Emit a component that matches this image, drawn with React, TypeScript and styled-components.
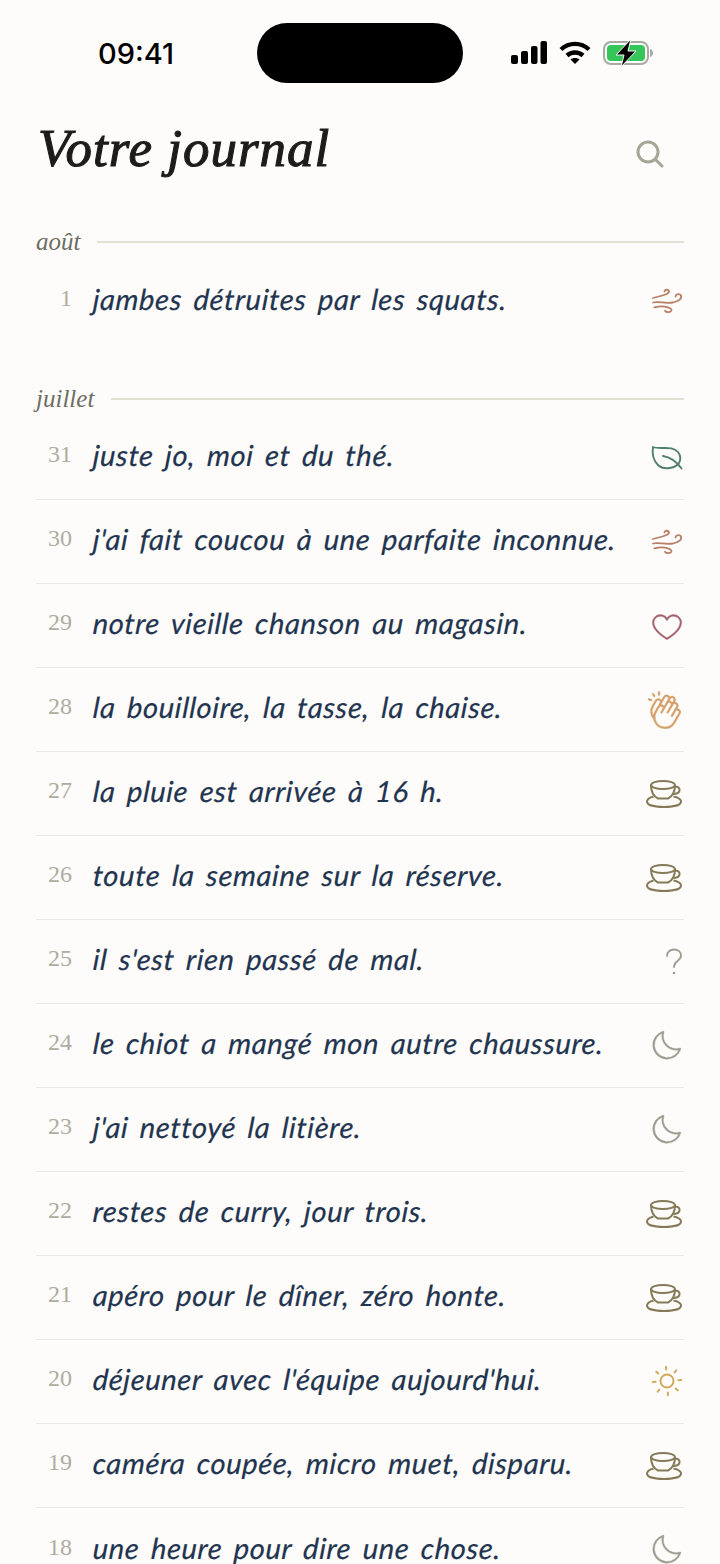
import React from 'react';
import styled, { createGlobalStyle } from 'styled-components';
import {
  PiHandsClappingLight,
  PiHeartLight,
  PiMagnifyingGlassBold,
  PiMoonLight,
} from 'react-icons/pi';

const GlobalStyle = createGlobalStyle`
  html, body {
    margin: 0;
    padding: 0;
    background: #fdfcfa;
  }
`;

const Screen = styled.div`
  width: 720px;
  height: 1564px;
  overflow: hidden;
  background: #fdfcfa;
`;

const StatusBar = styled.div`
  height: 106px;
  padding: 23px 66px 0 98px;
  box-sizing: border-box;
  display: flex;
  align-items: flex-start;
`;

const Time = styled.div`
  width: 159px;
  height: 60px;
  line-height: 61px;
  font-family: Inter, "Liberation Sans", sans-serif;
  font-size: 29px;
  font-weight: 500;
  color: #000;
`;

const Island = styled.div`
  width: 206px;
  height: 60px;
  border-radius: 30px;
  background: #000;
`;

const StatusIcons = styled.div`
  height: 60px;
  margin-left: 48px;
  display: flex;
  align-items: center;
  gap: 12px;
`;

const Header = styled.header`
  height: 119px;
  box-sizing: border-box;
  padding: 0 54px 35px 38px;
  display: flex;
  align-items: center;
  justify-content: space-between;
`;

const Title = styled.h1`
  margin: 0;
  font-family: "Liberation Serif", serif;
  font-style: italic;
  font-weight: 400;
  font-size: 53px;
  letter-spacing: 1px;
  color: #1d1c19;
  -webkit-text-stroke: 1.1px #1d1c19;
`;

const SearchButton = styled.div`
  display: flex;
  margin-top: 12px;
  color: #a5a697;
`;

const Section = styled.section`
  padding: 0 36px;
  margin-bottom: 39px;
`;

const MonthHeader = styled.div`
  height: 34px;
  display: flex;
  align-items: center;
  gap: 17px;
`;

const MonthName = styled.span`
  font-family: "Liberation Serif", serif;
  font-style: italic;
  font-size: 25px;
  color: #6e6c63;
`;

const MonthLine = styled.div`
  flex: 1;
  height: 2px;
  background: #e2e0d3;
`;

const Row = styled.div`
  height: 84px;
  box-sizing: border-box;
  padding-bottom: 6px;
  display: flex;
  align-items: center;
  border-bottom: 1px solid #ebe9e4;

  &:last-child {
    border-bottom: none;
  }
`;

const DayNumber = styled.span`
  width: 36px;
  flex: none;
  text-align: right;
  font-family: "Liberation Serif", serif;
  font-size: 24px;
  color: #aeada0;
`;

const EntryText = styled.span`
  flex: 1;
  margin-left: 21px;
  white-space: nowrap;
  font-family: Lato, "Noto Sans", sans-serif;
  font-style: italic;
  font-size: 29px;
  letter-spacing: 0.7px;
  word-spacing: 4px;
  color: #22344f;
  -webkit-text-stroke: 0.2px #22344f;
  transform: skewX(-4deg);
  transform-origin: left center;
`;

const MoodSlot = styled.div<{ $color: string }>`
  width: 42px;
  flex: none;
  margin-top: 6px;
  display: flex;
  justify-content: flex-end;
  color: ${(p) => p.$color};
`;

const ThickIcon = styled.span<{ $flip?: boolean }>`
  display: flex;
  transform: ${(p) => (p.$flip ? 'scaleX(-1)' : 'none')};

  svg {
    stroke: currentColor;
    stroke-width: 3;
  }
`;

const SignalIcon = () => (
  <svg width="36" height="24" viewBox="0 0 36 24">
    <rect x="0" y="14" width="7" height="9" rx="2" fill="#000" />
    <rect x="10" y="10" width="7" height="13" rx="2" fill="#000" />
    <rect x="20" y="5" width="6.500" height="18" rx="2" fill="#000" />
    <rect x="29.500" y="0" width="6.500" height="23" rx="2" fill="#000" />
  </svg>
);

const WifiIcon = () => (
  <svg width="32" height="24" viewBox="0 0 32 24" fill="none" stroke="#000" strokeWidth="4.4">
    <path d="M2 8.500C10 1 22 1 30 8.500" />
    <path d="M8 14.500C12.500 10.500 19.500 10.500 24 14.500" />
    <path d="M16 23l-4.500-4.500c2.500-2 6.500-2 9 0z" fill="#000" stroke="none" />
  </svg>
);

const BatteryIcon = () => (
  <svg width="50" height="26" viewBox="0 0 50 26">
    <rect x="1" y="2" width="44" height="22" rx="7" fill="none" stroke="#a8aaa4" strokeWidth="2" />
    <rect x="4" y="5" width="38" height="16" rx="4" fill="#35c659" />
    <path d="M47 9c2 .5 3 2 3 4s-1 3.500-3 4z" fill="#a8aaa4" />
    <path d="M28 -1L13 15h8l-3 12 15-16h-8z" fill="#000" stroke="#fdfcfa" strokeWidth="1" />
  </svg>
);

const WindIcon = () => (
  <svg width="33" height="26" viewBox="0 0 33 26" fill="none" stroke="currentColor" strokeWidth="1.8" strokeLinecap="round">
    <path d="M2 10C6 9 10 8 13 7C17 6 19 4 17.500 2.500C16 1 13.500 2 13.500 3.500" />
    <path d="M2 14.500C8 13 14 16 22 14.500C28 13 31 10.500 30 7.500C29 5.500 25 5.500 24.500 8.500" />
    <path d="M3.300 19.300C7 18.500 11 18 14 18.700C18 19.500 21 21 20.500 22.500C19.500 25 15 24.500 14 22.700" />
  </svg>
);

const LeafIcon = () => (
  <svg width="34" height="26" viewBox="0 0 34 26" fill="none" stroke="currentColor" strokeWidth="1.9" strokeLinecap="round" strokeLinejoin="round">
    <path d="M3 2C10 5 22 0 28 7C31 11 31 15 28.500 19C23 24 13 25 8 20C3 15 2 8 3 2Z" />
    <path d="M13 11C20 12 26 16 31.500 23.500" />
  </svg>
);

const TeaCupIcon = () => (
  <svg width="38" height="30" viewBox="0 0 38 30" fill="none" stroke="currentColor" strokeWidth="2">
    <ellipse cx="17" cy="6" rx="12" ry="4" />
    <path d="M5 6C5 13 7 17 12 19.500H22C27 17 29 13 29 6" />
    <path d="M29 8C32 7 34 9 33.500 11.500C33 14 30 15 27 15" />
    <path d="M7.500 17.500C4 18.500 1 20 1 22.500C1 26 8 28 18 28S35 26 35 22.500C35 20.500 32 18.500 27.500 17.500" />
  </svg>
);

const QuestionIcon = () => (
  <svg width="19" height="28" viewBox="0 0 19 28" fill="none" stroke="currentColor" strokeWidth="1.8" strokeLinecap="round">
    <path d="M2 8C2 4 5 1.500 9 1.500C13 1.500 16 4 16 7.500C16 10.500 14 12 12 13.500C10 15 9 16 9 19" />
    <circle cx="9" cy="25" r="1.300" fill="currentColor" stroke="none" />
  </svg>
);

const sunRays = [-4, 41, 86, 131, 176, 221, 266, 311];

const SunIcon = () => (
  <svg width="32" height="32" viewBox="0 0 32 32" fill="none" stroke="currentColor" strokeWidth="2" strokeLinecap="round">
    <circle cx="15" cy="15" r="6.500" />
    {sunRays.map((angle) => (
      <line key={angle} x1="15" y1="3.500" x2="15" y2="0.800" transform={`rotate(${angle} 15 15)`} />
    ))}
  </svg>
);

type Mood = 'wind' | 'leaf' | 'heart' | 'clap' | 'cup' | 'unknown' | 'moon' | 'sun';

const moodColors: Record<Mood, string> = {
  wind: '#b67f66',
  leaf: '#4f806c',
  heart: '#a3616b',
  clap: '#d49f68',
  cup: '#857a58',
  unknown: '#9c9d90',
  moon: '#9c9d90',
  sun: '#d2a95c',
};

const MoodIcon: React.FC<{ mood: Mood }> = ({ mood }) => {
  switch (mood) {
    case 'wind':
      return <WindIcon />;
    case 'leaf':
      return <LeafIcon />;
    case 'heart':
      return (
        <ThickIcon>
          <PiHeartLight size={34} />
        </ThickIcon>
      );
    case 'clap':
      return (
        <ThickIcon $flip>
          <PiHandsClappingLight size={38} />
        </ThickIcon>
      );
    case 'cup':
      return <TeaCupIcon />;
    case 'unknown':
      return <QuestionIcon />;
    case 'moon':
      return (
        <ThickIcon>
          <PiMoonLight size={36} />
        </ThickIcon>
      );
    default:
      return <SunIcon />;
  }
};

type Entry = { day: number; text: string; mood: Mood };

const august: Entry[] = [{ day: 1, text: 'jambes détruites par les squats.', mood: 'wind' }];

const july: Entry[] = [
  { day: 31, text: 'juste jo, moi et du thé.', mood: 'leaf' },
  { day: 30, text: "j'ai fait coucou à une parfaite inconnue.", mood: 'wind' },
  { day: 29, text: 'notre vieille chanson au magasin.', mood: 'heart' },
  { day: 28, text: 'la bouilloire, la tasse, la chaise.', mood: 'clap' },
  { day: 27, text: 'la pluie est arrivée à 16 h.', mood: 'cup' },
  { day: 26, text: 'toute la semaine sur la réserve.', mood: 'cup' },
  { day: 25, text: "il s'est rien passé de mal.", mood: 'unknown' },
  { day: 24, text: 'le chiot a mangé mon autre chaussure.', mood: 'moon' },
  { day: 23, text: "j'ai nettoyé la litière.", mood: 'moon' },
  { day: 22, text: 'restes de curry, jour trois.', mood: 'cup' },
  { day: 21, text: 'apéro pour le dîner, zéro honte.', mood: 'cup' },
  { day: 20, text: "déjeuner avec l'équipe aujourd'hui.", mood: 'sun' },
  { day: 19, text: 'caméra coupée, micro muet, disparu.', mood: 'cup' },
  { day: 18, text: 'une heure pour dire une chose.', mood: 'moon' },
];

const MonthSection: React.FC<{ name: string; entries: Entry[] }> = ({ name, entries }) => (
  <Section>
    <MonthHeader>
      <MonthName>{name}</MonthName>
      <MonthLine />
    </MonthHeader>
    {entries.map((entry) => (
      <Row key={entry.day}>
        <DayNumber>{entry.day}</DayNumber>
        <EntryText>{entry.text}</EntryText>
        <MoodSlot $color={moodColors[entry.mood]}>
          <MoodIcon mood={entry.mood} />
        </MoodSlot>
      </Row>
    ))}
  </Section>
);

const App: React.FC = () => {
  return (
    <Screen>
      <GlobalStyle />
      <StatusBar>
        <Time>09:41</Time>
        <Island />
        <StatusIcons>
          <SignalIcon />
          <WifiIcon />
          <BatteryIcon />
        </StatusIcons>
      </StatusBar>
      <Header>
        <Title>Votre journal</Title>
        <SearchButton>
          <PiMagnifyingGlassBold size={32} />
        </SearchButton>
      </Header>
      <MonthSection name="août" entries={august} />
      <MonthSection name="juillet" entries={july} />
    </Screen>
  );
};

export default App;
